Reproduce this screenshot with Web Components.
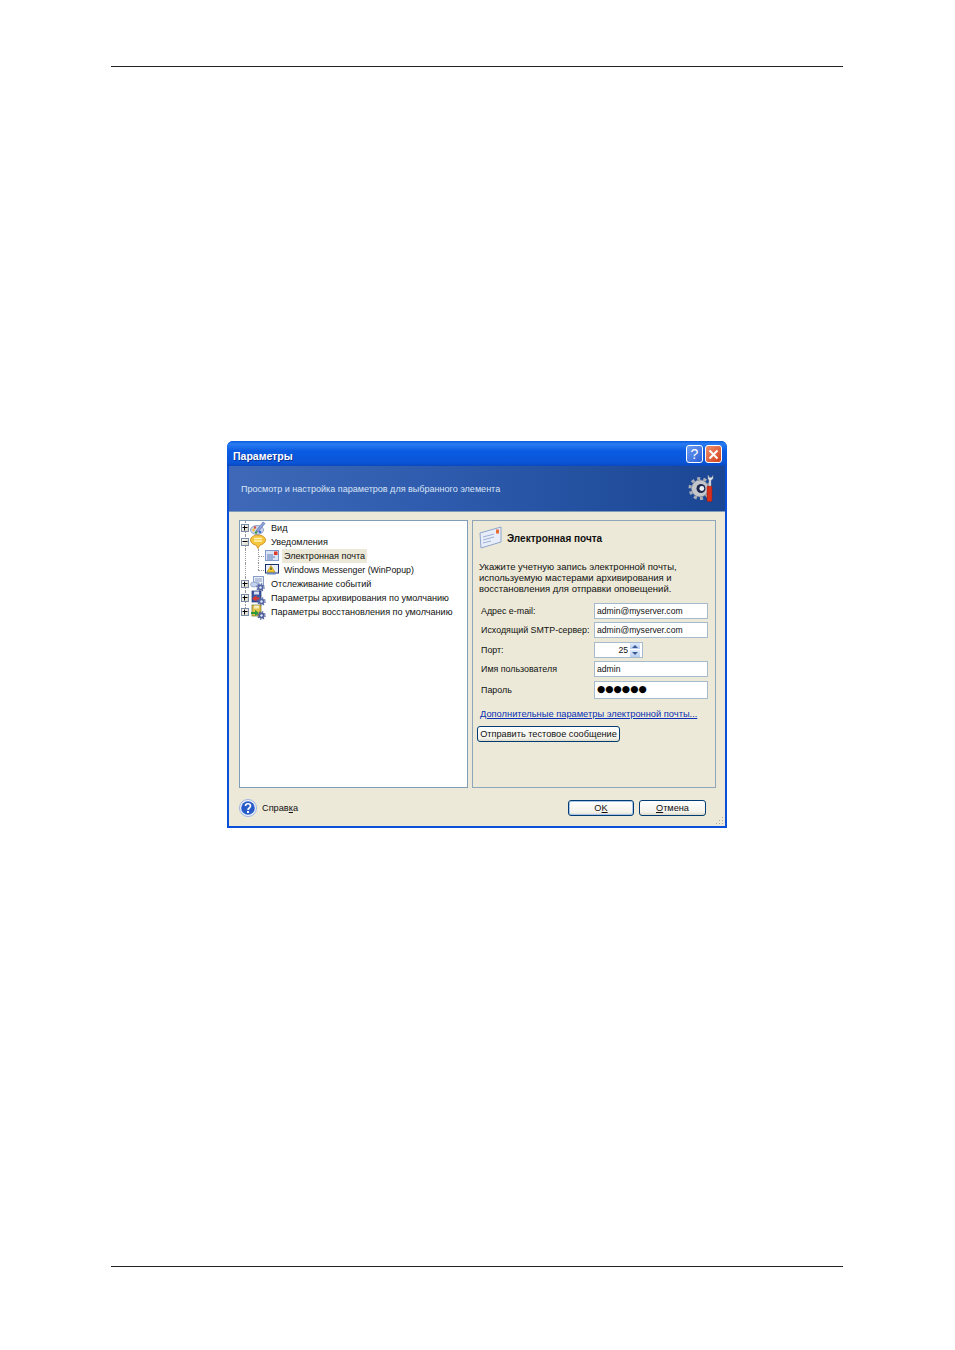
<!DOCTYPE html>
<html lang="ru">
<head>
<meta charset="utf-8">
<title>Параметры</title>
<style>
  html, body { margin: 0; background: #fff; }
  body { font-family: "Liberation Sans", Arial, sans-serif; color: #000; }
</style>
</head>
<body>
<doc-page>
  <settings-dialog>
    <tree-row slot="tree" state="plus" icon="view" level="0" line="mid">Вид</tree-row>
    <tree-row slot="tree" state="minus" icon="bubble" level="0" line="mid">Уведомления</tree-row>
    <tree-row slot="tree" icon="mail" level="1" line="mid" selected>Электронная почта</tree-row>
    <tree-row slot="tree" icon="msg" level="1" line="end"><span style="font-size:8.75px">Windows Messenger (WinPopup)</span></tree-row>
    <tree-row slot="tree" state="plus" icon="events" level="0" line="mid">Отслеживание событий</tree-row>
    <tree-row slot="tree" state="plus" icon="backup" level="0" line="mid">Параметры архивирования по умолчанию</tree-row>
    <tree-row slot="tree" state="plus" icon="restore" level="0" line="end">Параметры восстановления по умолчанию</tree-row>

    <form-row slot="form" label="Адрес e-mail:" value="admin@myserver.com"></form-row>
    <form-row slot="form" label="Исходящий SMTP-сервер:" value="admin@myserver.com"></form-row>
    <form-row slot="form" label="Порт:" value="25" kind="spin"></form-row>
    <form-row slot="form" label="Имя пользователя" value="admin"></form-row>
    <form-row slot="form" label="Пароль" value="●●●●●●" kind="password"></form-row>
  </settings-dialog>
</doc-page>

<script>
const smallGear = (cx, cy, fill) => `<circle cx="${cx}" cy="${cy}" r="3" fill="${fill}"/><circle cx="${cx}" cy="${cy}" r="3.6" fill="none" stroke="${fill}" stroke-width="1.4" stroke-dasharray="1.400 1.430"/><circle cx="${cx}" cy="${cy}" r="1.200" fill="#e4e9f6"/>`;

const ICONS = {
  view: `<svg width="16" height="16" viewBox="0 0 16 16"><ellipse cx="7" cy="10" rx="6.500" ry="4.500" fill="#cfd8ee" stroke="#6f80b4" stroke-width=".7"/><path d="M6 11 13 2l2 1.500L8 12z" fill="#8fa6dc" stroke="#4f62a0" stroke-width=".6"/><circle cx="3.500" cy="10" r="1.400" fill="#f0c33c"/><circle cx="6" cy="12.500" r="1.300" fill="#3f9a4c"/><circle cx="10" cy="12" r="1.300" fill="#3f6fd0"/><circle cx="5" cy="7.500" r="1.200" fill="#d8503c"/></svg>`,
  bubble: `<svg width="16" height="16" viewBox="0 0 16 16"><path d="M8 1c4 0 7.500 2 7.500 5s-3.500 5-5.500 5l-2 3.500L6 11c-2 0-5.500-2-5.500-5S4 1 8 1z" fill="#f6c53e" stroke="#c98a18" stroke-width=".8"/><path d="M4 4.500h8M4 7h8" stroke="#fff3b8" stroke-width="1.300"/></svg>`,
  mail: `<svg width="16" height="12" viewBox="0 0 16 12"><rect x="1.500" y=".5" width="13" height="10" fill="#d9e3f4" stroke="#7f98c8"/><path d="M3 5h6M3 7h8M3 9h6" stroke="#5f7fbc"/><rect x="10" y="1.500" width="3.500" height="3.500" fill="#e2382a"/></svg>`,
  msg: `<svg width="16" height="12" viewBox="0 0 16 12"><rect x="1.500" y=".5" width="13" height="8.500" fill="#e9eef8" stroke="#17306e"/><path d="M7 1.500l4 6.500H3z" fill="#f8cf2e" stroke="#a8801a" stroke-width=".6"/><path d="M7 3.500v2.500" stroke="#222"/><rect x="3" y="9" width="9" height="1.500" fill="#6d8bc2"/></svg>`,
  events: `<svg width="16" height="16" viewBox="0 0 16 16"><rect x="3.500" y=".5" width="10" height="9" fill="#e8eef8" stroke="#8a9cc4"/><path d="M5 3h7M5 5h7M5 7h4" stroke="#8a9cc4"/><ellipse cx="4" cy="8.500" rx="3.500" ry="2.500" fill="#c4d4ee" stroke="#7f94bd" stroke-width=".7"/>${smallGear(10.5, 11.5, "#5566a4")}</svg>`,
  backup: `<svg width="16" height="16" viewBox="0 0 16 16"><rect x="2" y="1" width="9" height="11" fill="#3c5aa8" stroke="#1e336e" stroke-width=".7"/><rect x="4" y="1.500" width="5" height="3" fill="#d8e0f2"/><path d="M6.500 5.500 2 8.500l4.500 3z" fill="#e0382a"/><path d="M5 8.500h5" stroke="#e0382a" stroke-width="2"/>${smallGear(11.5, 11.5, "#5566a4")}</svg>`,
  restore: `<svg width="16" height="16" viewBox="0 0 16 16"><rect x="2" y="1" width="9" height="11" fill="#e2c34a" stroke="#6d6a2a" stroke-width=".7"/><rect x="4" y="1.500" width="5" height="3" fill="#f5edc0"/><path d="M5 6l4 3-4 3z" fill="#2d9a3a"/><path d="M1 9h5" stroke="#2d9a3a" stroke-width="2"/>${smallGear(11.5, 11.5, "#4c5c98")}</svg>`
};

class DocPage extends HTMLElement {
  constructor() {
    super();
    this.attachShadow({ mode: "open" });
    this.shadowRoot.innerHTML = `
      <style>
        :host { display: flex; flex-direction: column; height: 1350px; box-sizing: border-box; padding: 66px 112px 83px 111px; }
        .rule { height: 1px; background: #222; flex: none; }
        .mid { flex: 1; display: flex; flex-direction: column; align-items: flex-start; padding: 374px 0 0 116px; }
      </style>
      <div class="rule"></div>
      <div class="mid"><slot></slot></div>
      <div class="rule"></div>`;
  }
}

class TreeRow extends HTMLElement {
  constructor() {
    super();
    this.attachShadow({ mode: "open" });
  }
  connectedCallback() {
    const level = this.getAttribute("level") === "1" ? 1 : 0;
    const state = this.getAttribute("state");
    const end = this.getAttribute("line") === "end";
    const sign = state
      ? `<span class="box">${state === "plus"
          ? '<svg width="6" height="6" viewBox="0 0 6 6"><path d="M.5 2.500h5M2.500 .5v5" stroke="#000"/></svg>'
          : '<svg width="6" height="6" viewBox="0 0 6 6"><path d="M.5 2.500h5" stroke="#000"/></svg>'}</span>`
      : "";
    this.shadowRoot.innerHTML = `
      <style>
        :host { display: block; height: 14px; font-size: 9.1px; }
        .row { display: flex; align-items: center; height: 100%; }
        .gutter { width: 8px; flex: none; height: 100%; display: flex; align-items: center; justify-content: center; position: relative; }
        .gutter.trunk::before { content: ""; position: absolute; left: 4px; top: 0; bottom: 0; border-left: 1px dotted #999; }
        .gutter.half::before { bottom: 50%; }
        .box { box-sizing: border-box; width: 8px; height: 8px; border: 1px solid #7a8ba5; background: linear-gradient(135deg, #fff, #d8d4c4); display: flex; z-index: 1; }
        .elbow { width: 15px; flex: none; height: 100%; position: relative; }
        .elbow::before { content: ""; position: absolute; left: 9px; top: 0; bottom: ${end ? "50%" : "0"}; border-left: 1px dotted #999; }
        .elbow::after { content: ""; position: absolute; left: 9px; width: 6px; top: 50%; border-top: 1px dotted #999; }
        .icon { width: 16px; flex: none; display: flex; align-items: center; justify-content: center; margin-left: ${level ? "0" : "1px"}; }
        .label { margin-left: ${level ? "2px" : "3px"}; padding: 1px 2px; line-height: 12px; white-space: nowrap; color: #111; }
        :host([selected]) .label { background: #ece9d8; }
      </style>
      <div class="row">
        <span class="gutter trunk ${!level && end ? "half" : ""}">${sign}</span>
        ${level ? '<span class="elbow"></span>' : ""}
        <span class="icon">${ICONS[this.getAttribute("icon")] || ""}</span>
        <span class="label"><slot></slot></span>
      </div>`;
  }
}

class FormRow extends HTMLElement {
  constructor() {
    super();
    this.attachShadow({ mode: "open" });
  }
  connectedCallback() {
    const kind = this.getAttribute("kind") || "text";
    const spin = kind === "spin";
    const pass = kind === "password";
    this.shadowRoot.innerHTML = `
      <style>
        :host { display: grid; grid-template-columns: 114px 114px; align-items: center; font-size: 8.9px; color: #111; height: ${pass ? "18px" : "16px"}; }
        .label { padding-left: 1px; white-space: nowrap; }
        .field { box-sizing: border-box; height: 100%; background: #fff; border: 1px solid #a5bbcd; display: flex; align-items: center; padding: 0 2px; width: ${spin ? "49px" : "114px"}; }
        .value { flex: 1; white-space: nowrap; font-size: 8.6px; text-align: ${spin ? "right" : "left"}; padding-right: ${spin ? "2px" : "0"}; }
        .dots { font-size: 9.5px; color: #000; padding: 0 0 3px 0; font-family: "DejaVu Sans", sans-serif; }
        .spin { width: 10px; flex: none; height: 100%; display: flex; flex-direction: column; gap: 1px; }
        .spin span { flex: 1; background: linear-gradient(#dfeafb, #b7cdf0); display: flex; align-items: center; justify-content: center; }
      </style>
      <span class="label">${this.getAttribute("label")}</span>
      <div class="field">
        <span class="value ${pass ? "dots" : ""}">${this.getAttribute("value")}</span>
        ${spin ? `<span class="spin">
          <span><svg width="6" height="4" viewBox="0 0 6 4"><path d="M0 4l3-3 3 3z" fill="#3a5a94"/></svg></span>
          <span><svg width="6" height="4" viewBox="0 0 6 4"><path d="M0 0l3 3 3-3z" fill="#3a5a94"/></svg></span>
        </span>` : ""}
      </div>`;
  }
}

class XpButton extends HTMLElement {
  constructor() {
    super();
    this.attachShadow({ mode: "open" });
    this.shadowRoot.innerHTML = `
      <style>
        :host { display: inline-flex; box-sizing: border-box; height: 16px; align-items: center; justify-content: center; border: 1px solid #003c74; border-radius: 3px; background: linear-gradient(#fff, #f3f2ea 80%, #dcd8c8); font-size: 9.2px; color: #111; white-space: nowrap; }
        :host([primary]) { box-shadow: inset 0 0 0 1px #a9c4ea; }
      </style>
      <slot></slot>`;
  }
}

class SettingsDialog extends HTMLElement {
  constructor() {
    super();
    this.attachShadow({ mode: "open" });
    this.shadowRoot.innerHTML = `
      <style>
        :host { display: block; width: 500px; height: 387px; box-sizing: border-box; background: #0a4fd8; border-radius: 6px 6px 0 0; padding: 0 2px 2px; font-size: 9.2px; }
        .frame { height: 100%; display: flex; flex-direction: column; position: relative; }
        .title { height: 25px; box-sizing: border-box; flex: none; display: flex; align-items: center; justify-content: space-between; margin: 0 -2px; padding: 4px 5px 0 6px;
                 background: linear-gradient(#0a5ae0 0, #2a7cf0 12%, #0b5be2 40%, #0a55d8 85%, #0a48c0); border-radius: 6px 6px 0 0; }
        .title b { color: #fff; font-size: 10.5px; text-shadow: 1px 1px 0 #0a2f90; }
        .btns { display: flex; gap: 2px; margin-top: -3px; }
        .btn { box-sizing: border-box; width: 17px; height: 18px; border: 1px solid #fff; border-radius: 3px; display: flex; align-items: center; justify-content: center; }
        .help { background: linear-gradient(135deg, #6f9df0, #2a5fd8); color: #fff; font-size: 14px; line-height: 1; }
        .close { background: linear-gradient(135deg, #f0906c, #d2401c); }
        .banner { height: 46px; flex: none; display: flex; align-items: center; justify-content: space-between; padding: 0 11px 0 12px; box-sizing: border-box;
                  background: linear-gradient(90deg, #3f69b8, #2f5cae 40%, #1b4694); border-bottom: 1px solid #7f9db9; color: #d9e4f5; font-size: 9.04px; }
        .body { flex: 1; background: #ece9d8; display: flex; flex-direction: column; padding: 8px 9px 0 10px; min-height: 0; }
        .panes { display: flex; gap: 4px; height: 268px; flex: none; }
        .tree { width: 229px; box-sizing: border-box; border: 1px solid #7f9db9; background: #fff; padding: .4px 0 0 1px; }
        .side { flex: 1; box-sizing: border-box; border: 1px solid #8fa6b8; padding: 5px 7px 0 6px; display: flex; flex-direction: column; }
        .head { display: flex; align-items: center; gap: 4px; height: 24px; font-weight: bold; font-size: 10px; color: #111; }
        .desc { margin: 11px 0 0 0; line-height: 11px; font-size: 9.5px; color: #111; }
        .form { display: flex; flex-direction: column; gap: 3.400px; margin: 9px 0 0 1px; }
        .link { color: #0a2fb4; text-decoration: underline; font-size: 9.3px; margin: 10px 0 0 1px; white-space: nowrap; }
        .send { margin: 7px 0 0 -2px; align-self: flex-start; width: 143px; }
        .foot { flex: 1; display: flex; align-items: flex-start; padding: 11px 9px 0 0; }
        .helpicon { width: 18px; height: 18px; margin: 0 5px 0 0; flex: none; }
        .sp { flex: 1; color: #111; padding-top: 4px; }
        .ok { width: 66px; margin: 1px 5px 0 0; }
        .cancel { width: 67px; margin: 1px 1px 0 0; }
        .grip { position: absolute; right: 1px; bottom: 1px; }
      </style>
      <div class="frame">
        <div class="title">
          <b>Параметры</b>
          <div class="btns">
            <span class="btn help">?</span>
            <span class="btn close"><svg width="11" height="11" viewBox="0 0 11 11"><path d="M1.500 1.500l8 8M9.500 1.500l-8 8" stroke="#fff" stroke-width="2"/></svg></span>
          </div>
        </div>
        <div class="banner">
          <span>Просмотр и настройка параметров для выбранного элемента</span>
          <svg width="26" height="27" viewBox="0 0 26 27">
            <circle cx="12" cy="13.500" r="8.500" fill="#c4c6cc" stroke="#7b8494" stroke-width=".6"/>
            <circle cx="12" cy="13.500" r="10" fill="none" stroke="#a9adb6" stroke-width="3" stroke-dasharray="3.100 3.180"/>
            <circle cx="13" cy="13.500" r="4.500" fill="#1d2a50"/>
            <circle cx="13.800" cy="13.500" r="2.400" fill="#eef1f8"/>
            <rect x="19" y="11" width="5" height="15.500" rx="1" fill="#d8301c" stroke="#8f1c10" stroke-width=".5"/>
            <path d="M20 0v3.500l1 2v5.500h2V5.500l2-2V.5l-1.500 2h-2z" fill="#dfe3ea" stroke="#8a92a0" stroke-width=".5"/>
          </svg>
        </div>
        <div class="body">
          <div class="panes">
            <div class="tree"><slot name="tree"></slot></div>
            <div class="side">
              <div class="head">
                <svg width="24" height="24" viewBox="0 0 24 24"><path d="M1 7 22 1v15L2 22z" fill="#e8eef9" stroke="#8fa4cc"/><path d="M4 11l11-3M4 14l11-3M4 17l8-2" stroke="#9db0d6"/><rect x="17" y="3.500" width="3" height="4" fill="#e86a34"/></svg>
                <span>Электронная почта</span>
              </div>
              <div class="desc">Укажите учетную запись электронной почты,<br>используемую мастерами архивирования и<br>восстановления для отправки оповещений.</div>
              <div class="form"><slot name="form"></slot></div>
              <div class="link">Дополнительные параметры электронной почты...</div>
              <xp-button class="send">Отправить тестовое сообщение</xp-button>
            </div>
          </div>
          <div class="foot">
            <svg class="helpicon" viewBox="0 0 18 18"><circle cx="9" cy="9" r="8.500" fill="#eef3fb" stroke="#9db4dc"/><circle cx="9" cy="9" r="6.800" fill="#2a5cc8"/><path d="M6.500 7c0-3 5-3 5 0 0 2-2.500 2-2.500 4" fill="none" stroke="#fff" stroke-width="1.700"/><rect x="8" y="12" width="2" height="2" fill="#fff"/></svg>
            <span class="sp">Справ<u>к</u>а</span>
            <xp-button class="ok" primary><span>O<u>K</u></span></xp-button>
            <xp-button class="cancel"><span><u>О</u>тмена</span></xp-button>
          </div>
        </div>
        <svg class="grip" width="9" height="9" viewBox="0 0 9 9"><path d="M7 1h1v1H7zM4 4h1v1H4zM7 4h1v1H7zM1 7h1v1H1zM4 7h1v1H4zM7 7h1v1H7z" fill="#b0ad9c"/></svg>
      </div>`;
  }
}

customElements.define("doc-page", DocPage);
customElements.define("tree-row", TreeRow);
customElements.define("form-row", FormRow);
customElements.define("xp-button", XpButton);
customElements.define("settings-dialog", SettingsDialog);
</script>
</body>
</html>
